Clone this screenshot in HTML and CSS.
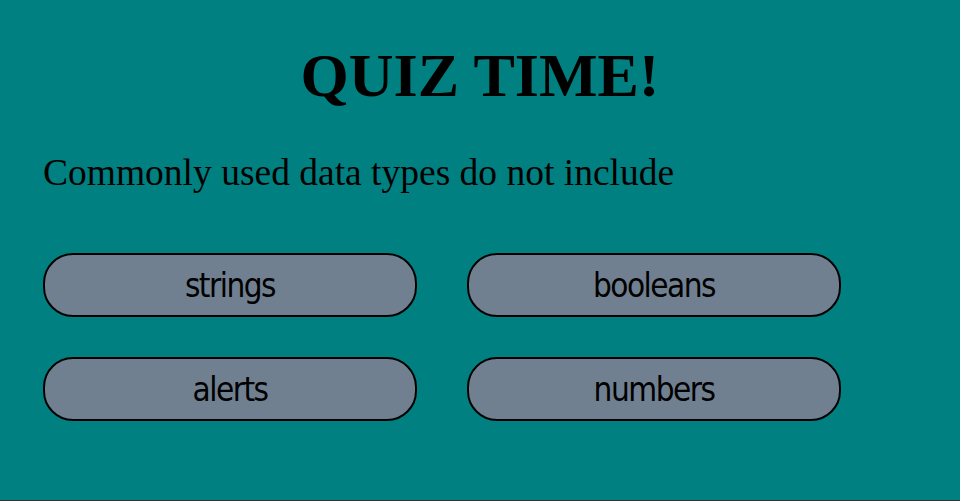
FILE: index.html
```html
<!DOCTYPE html>
<html lang="en">
<head>
<meta charset="utf-8">
<title>Quiz</title>
<link rel="stylesheet" href="styles.css">
</head>
<body>
<main class="page">
  <h1 class="title">QUIZ TIME!</h1>
  <p class="question">Commonly used data types do not include</p>
  <div class="answers">
    <button class="answer">strings</button>
    <button class="answer">booleans</button>
    <button class="answer">alerts</button>
    <button class="answer">numbers</button>
  </div>
</main>
</body>
</html>
```
FILE: styles.css
```css
html {
  background: #333;
}
body {
  margin: 0;
}
.page {
  box-sizing: border-box;
  height: 500px;
  background: #008080;
  padding: 43px 43px 0;
  display: flex;
  flex-direction: column;
  font-family: "Liberation Serif", "Times New Roman", serif;
  color: #000;
}
.title {
  margin: 0;
  font-size: 62px;
  font-weight: bold;
  line-height: 64px;
  text-align: center;
}
.question {
  margin: 46px 0 0;
  font-size: 37.5px;
  line-height: 40px;
}
.answers {
  margin-top: 60px;
  display: grid;
  grid-template-columns: 374px 374px;
  column-gap: 50px;
  row-gap: 40px;
}
.answer {
  box-sizing: border-box;
  height: 64px;
  border: 2px solid #000;
  border-radius: 30px;
  background: #708090;
  color: #000;
  font-family: "DejaVu Sans Condensed", "DejaVu Sans", sans-serif;
  font-stretch: condensed;
  font-size: 33px;
  letter-spacing: -1.5px;
  line-height: 38px;
  padding: 1px 0 0;
  display: flex;
  align-items: center;
  justify-content: center;
}
```
